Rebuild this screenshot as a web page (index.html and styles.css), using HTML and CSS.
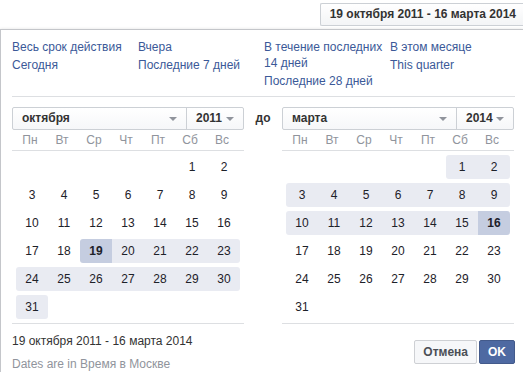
FILE: index.html
```html
<!DOCTYPE html>
<html>
  <head>
    <meta charset="utf-8">
    <title>Выбор периода</title>
    <link rel="stylesheet" href="styles.css">
  </head>
  <body>
    <!-- кнопка периода -->
    <div class="top">
      <div class="range-btn">19 октября 2011 - 16 марта 2014</div>
    </div>
    <!-- панель -->
    <div class="panel">
      <div class="content">
        <!-- быстрые периоды -->
        <div class="presets">
          <div class="preset-col">
            <a href="#">Весь срок действия</a>
            <a href="#">Сегодня</a>
          </div>
          <div class="preset-col">
            <a href="#">Вчера</a>
            <a href="#">Последние 7 дней</a>
          </div>
          <div class="preset-col">
            <a href="#">В течение последних 14 дней</a>
            <a href="#">Последние 28 дней</a>
          </div>
          <div class="preset-col">
            <a href="#">В этом месяце</a>
            <a href="#">This quarter</a>
          </div>
        </div>
        <!-- календари -->
        <div class="calendars">
          <div class="cal">
            <div class="selects">
              <div class="sel sel-month">октября<span class="arrow"></span></div>
              <div class="sel sel-year">2011<span class="arrow"></span></div>
            </div>
            <div class="weekdays">
              <span>Пн</span><span>Вт</span><span>Ср</span><span>Чт</span><span>Пт</span><span>Сб</span><span>Вс</span>
            </div>
            <div class="days">
              <span></span><span></span><span></span><span></span><span></span><span>1</span><span>2</span>
              <span>3</span><span>4</span><span>5</span><span>6</span><span>7</span><span>8</span><span>9</span>
              <span>10</span><span>11</span><span>12</span><span>13</span><span>14</span><span>15</span><span>16</span>
              <span>17</span><span>18</span><span class="in sel-day l">19</span><span class="in">20</span><span class="in">21</span><span class="in">22</span><span class="in r">23</span>
              <span class="in l">24</span><span class="in">25</span><span class="in">26</span><span class="in">27</span><span class="in">28</span><span class="in">29</span><span class="in r">30</span>
              <span class="in l r">31</span>
            </div>
          </div>
          <div class="to">до</div>
          <div class="cal">
            <div class="selects">
              <div class="sel sel-month">марта<span class="arrow"></span></div>
              <div class="sel sel-year">2014<span class="arrow"></span></div>
            </div>
            <div class="weekdays">
              <span>Пн</span><span>Вт</span><span>Ср</span><span>Чт</span><span>Пт</span><span>Сб</span><span>Вс</span>
            </div>
            <div class="days">
              <span></span><span></span><span></span><span></span><span></span><span class="in l">1</span><span class="in r">2</span>
              <span class="in l">3</span><span class="in">4</span><span class="in">5</span><span class="in">6</span><span class="in">7</span><span class="in">8</span><span class="in r">9</span>
              <span class="in l">10</span><span class="in">11</span><span class="in">12</span><span class="in">13</span><span class="in">14</span><span class="in">15</span><span class="in sel-day r">16</span>
              <span>17</span><span>18</span><span>19</span><span>20</span><span>21</span><span>22</span><span>23</span>
              <span>24</span><span>25</span><span>26</span><span>27</span><span>28</span><span>29</span><span>30</span>
              <span>31</span>
            </div>
          </div>
        </div>
        <!-- низ -->
        <div class="footer">
          <div class="summary">
            <div class="summary-range">19 октября 2011 - 16 марта 2014</div>
            <div class="summary-tz">Dates are in Время в Москве</div>
          </div>
          <div class="buttons">
            <a href="#" class="btn btn-cancel">Отмена</a>
            <a href="#" class="btn btn-ok">OK</a>
          </div>
        </div>
      </div>
    </div>
  </body>
</html>
```

FILE: styles.css
```css
/* сброс */

body {
  margin: 0;
  background: #fff;
  font-family: "Liberation Sans", Arial, Helvetica, sans-serif;
  font-size: 12px;
  color: #1d2129;
  overflow: hidden;
}
a {
  text-decoration: none;
}

/* кнопка периода */

.top {
  height: 29px;
  display: flex;
  justify-content: flex-end;
}
.range-btn {
  box-sizing: border-box;
  height: 23px;
  margin-top: 3px;
  padding: 0 7px 0 9px;
  line-height: 21px;
  font-weight: bold;
  color: #333;
  background: linear-gradient(#fff, #f3f4f6);
  border: 1px solid #ccd0d5;
  border-right: 0;
  border-radius: 2px 0 0 2px;
  white-space: nowrap;
}

/* панель */

.panel {
  box-sizing: border-box;
  width: 523px;
  border: 1px solid #c4c6ca;
  border-right: 0;
  border-bottom: 0;
  box-shadow: 0 0 3px rgba(0,0,0,0.12);
  padding-left: 11px;
}
.content {
  width: 503px;
}

/* быстрые периоды */

.presets {
  display: grid;
  grid-template-columns: repeat(4, 126px);
  padding: 9px 0 5px 0;
  border-bottom: 1px solid #dddfe2;
}
.preset-col a {
  display: block;
  line-height: 16px;
  margin-bottom: 2px;
  color: #3b5998;
  padding-right: 4px;
}

/* календари */

.calendars {
  display: flex;
  align-items: flex-start;
}
.cal {
  width: 232px;
  border-bottom: 1px solid #dddfe2;
}
.to {
  width: 38px;
  margin-top: 10px;
  line-height: 23px;
  text-align: center;
  font-weight: bold;
  color: #333;
}
.selects {
  display: flex;
  margin-top: 10px;
  height: 23px;
  box-sizing: border-box;
  border: 1px solid #ccd0d5;
  border-radius: 2px;
  background: linear-gradient(#fff, #f6f7f9);
}
.sel {
  position: relative;
  box-sizing: border-box;
  line-height: 21px;
  font-weight: bold;
  color: #333;
}
.sel-month {
  width: 173px;
  padding-left: 9px;
}
.sel-year {
  flex: 1;
  padding-left: 9px;
  border-left: 1px solid #ccd0d5;
}
.arrow {
  position: absolute;
  top: 9px;
  right: 9px;
  width: 0;
  height: 0;
  border-left: 4px solid transparent;
  border-right: 4px solid transparent;
  border-top: 4px solid #90949c;
}
.weekdays {
  display: grid;
  grid-template-columns: repeat(7, 32px);
  padding: 0 6px 0 2px;
  height: 20px;
  line-height: 20px;
  border-bottom: 1px solid #dddfe2;
  color: #90949c;
  text-align: center;
}
.days {
  display: grid;
  grid-template-columns: repeat(7, 32px);
  grid-auto-rows: 24px;
  row-gap: 4px;
  padding: 4px;
}
.days span {
  line-height: 24px;
  text-align: center;
  color: #1d2129;
}
.days .in {
  background-color: #e9ebf2;
}
.days .sel-day {
  background-color: #c5cde0;
  font-weight: bold;
}
.days .l {
  border-top-left-radius: 3px;
  border-bottom-left-radius: 3px;
}
.days .r {
  border-top-right-radius: 3px;
  border-bottom-right-radius: 3px;
}

/* низ */

.footer {
  display: flex;
  justify-content: space-between;
  align-items: flex-start;
  width: 503px;
}
.summary {
  padding-top: 9px;
  line-height: 16px;
}
.summary-range {
  color: #333;
}
.summary-tz {
  margin-top: 7px;
  color: #90949c;
}
.buttons {
  display: flex;
  gap: 2px;
  margin-top: 16px;
}
.btn {
  box-sizing: border-box;
  height: 24px;
  line-height: 22px;
  padding: 0 8px;
  font-weight: bold;
  border-radius: 2px;
}
.btn-cancel {
  color: #4b4f56;
  background: #f6f7f9;
  border: 1px solid #ced0d4;
}
.btn-ok {
  color: #fff;
  background: #4e69a2;
  border: 1px solid #435a8b;
}
```
